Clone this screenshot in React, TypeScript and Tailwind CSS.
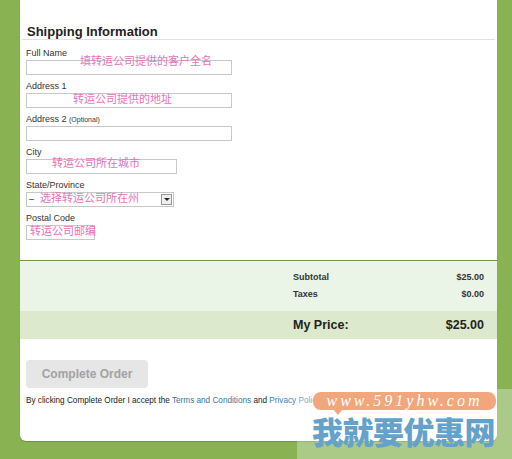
import React from 'react'

const font = { fontFamily: '"Liberation Sans", Arial, sans-serif' }
const cjk = '[font-family:"Noto_Sans_CJK_SC",sans-serif]'

type FieldProps = {
	label: React.ReactNode
	width: string
	note?: string
	noteClass?: string
	select?: boolean
}

function Field({ label, width, note, noteClass, select }: FieldProps) {
	return (
		<div className="relative flex flex-col">
			<label className="h-[11px] text-[9px] leading-[11px] text-[#333]">{label}</label>
			<div
				className={`mt-[1px] flex h-[15px] items-center border border-[#c8c8c8] bg-white ${width}`}
			>
				{select && (
					<>
						<span className="flex-1 pl-[2px] text-[9px] leading-none text-[#222]">–</span>
						<span className="mr-[1px] flex h-[11px] w-[11px] items-center justify-center border border-[#999] bg-[#eee]">
							<span className="h-0 w-0 border-x-[3px] border-t-[3px] border-x-transparent border-t-[#222]" />
						</span>
					</>
				)}
			</div>
			{note && (
				<span
					className={`absolute text-[11px] leading-[12px] whitespace-nowrap text-[#e672bb] ${cjk} ${noteClass}`}
				>
					{note}
				</span>
			)}
		</div>
	)
}

export default function App() {
	return (
		<div
			className="relative h-[459px] w-[512px] overflow-hidden bg-[#89b353]"
			style={font}
		>
			<div className="ml-[20px] flex h-[441px] w-[477px] flex-col rounded-b-[6px] bg-white shadow-[0_1px_1px_#6f9540]">
				<div className="mx-[2px] mt-[24px] border-b border-[#e2e2e2] px-[5px]">
					<h2 className="text-[13px] leading-[15px] font-bold text-[#222]">Shipping Information</h2>
				</div>

				<div className="mt-[8px] flex flex-col gap-[6px] px-[6px]">
					<Field
						label="Full Name"
						width="w-[206px]"
						note="填转运公司提供的客户全名"
						noteClass="left-[54px] top-[6px]"
					/>
					<Field
						label="Address 1"
						width="w-[206px]"
						note="转运公司提供的地址"
						noteClass="left-[47px] top-[11px]"
					/>
					<Field
						label={
							<>
								Address 2 <span className="text-[7px]">(Optional)</span>
							</>
						}
						width="w-[206px]"
					/>
					<Field
						label="City"
						width="w-[151px]"
						note="转运公司所在城市"
						noteClass="left-[26px] top-[9px]"
					/>
					<Field
						label="State/Province"
						width="w-[148px]"
						select
						note="选择转运公司所在州"
						noteClass="left-[14px] top-[11px]"
					/>
					<Field
						label="Postal Code"
						width="w-[69px]"
						note="转运公司邮编"
						noteClass="left-[4px] top-[11px]"
					/>
				</div>

				<div className="mt-[20px] border-t border-[#6f9a48]">
					<div className="flex h-[50px] flex-col justify-center gap-[6px] bg-[#ebf5e7] pr-[13px] pl-[273px] text-[9px] font-bold text-[#333]">
						<div className="flex justify-between leading-[11px]">
							<span>Subtotal</span>
							<span>$25.00</span>
						</div>
						<div className="flex justify-between leading-[11px]">
							<span>Taxes</span>
							<span>$0.00</span>
						</div>
					</div>
					<div className="flex h-[28px] items-center justify-between bg-[#dde9cc] pr-[13px] pl-[273px] text-[12.5px] font-bold text-[#222]">
						<span>My Price:</span>
						<span>$25.00</span>
					</div>
				</div>

				<div className="px-[6px] pt-[21px]">
					<button className="h-[28px] w-[122px] rounded-[4px] bg-[#e6e6e6] text-[12px] font-bold text-[#a2a2a2]">
						Complete Order
					</button>
					<p className="mt-[7px] text-[8.2px] leading-[11px] text-[#222]">
						By clicking Complete Order I accept the{' '}
						<a className="text-[#2f77a6]">Terms and Conditions</a> and{' '}
						<a className="text-[#3b82b8]">Privacy Policy</a>
					</p>
				</div>
			</div>

			<div className="absolute top-[389px] left-[297px] h-[70px] w-[215px] bg-white/30" />
			<div className="absolute top-[392px] left-[313px] flex h-[18px] w-[183px] items-center justify-center rounded-[8px] bg-[#f1a77b]">
				<span className="text-[16px] leading-none tracking-[3px] text-white italic [font-family:'Liberation_Serif',serif]">
					www.591yhw.com
				</span>
			</div>
			<div className="absolute top-[409px] left-[333px] h-0 w-0 border-x-[5px] border-t-[6px] border-x-transparent border-t-[#f1a77b]" />
			<div
				className={`absolute top-[412px] left-[312px] text-[31px] leading-[38px] font-black tracking-[-0.5px] text-[#65a2cb] ${cjk}`}
			>
				我就要优惠网
			</div>
		</div>
	)
}
